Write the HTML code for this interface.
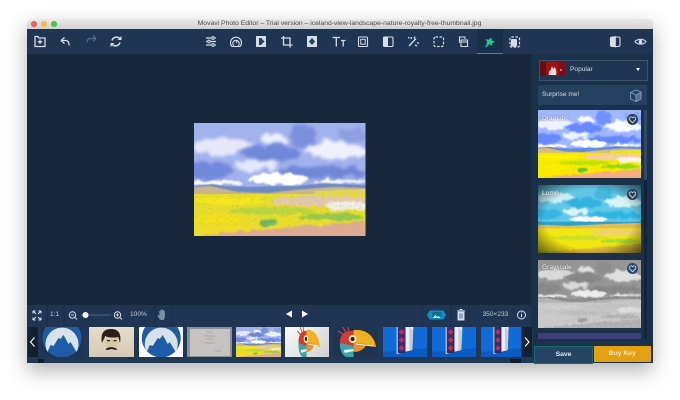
<!DOCTYPE html>
<html><head><meta charset="utf-8">
<style>
html{background:#fff}
html,body{margin:0;padding:0;width:680px;height:400px;overflow:hidden;font-family:"Liberation Sans",sans-serif}
body{position:relative;filter:blur(.3px);background:#fff}
.a{position:absolute}
#win{left:27px;top:18.500px;width:625.500px;height:344.500px;box-shadow:0 8px 20px rgba(0,0,0,.3);border-radius:4px 4px 2px 2px}
svg{display:block}
.t{color:#c3ccd6;font-size:6.600px;white-space:nowrap;line-height:10px}
</style></head><body>
<svg width="0" height="0" style="position:absolute">
<defs>
<filter id="rough" x="-20%" y="-20%" width="140%" height="140%" color-interpolation-filters="sRGB"><feTurbulence type="fractalNoise" baseFrequency=".08" numOctaves="4" seed="7"/><feDisplacementMap in="SourceGraphic" scale="14" xChannelSelector="R" yChannelSelector="G"/><feGaussianBlur stdDeviation="1.500"/></filter>
<filter id="rough2" x="-10%" y="-20%" width="120%" height="140%" color-interpolation-filters="sRGB"><feTurbulence type="fractalNoise" baseFrequency=".14" numOctaves="3" seed="3"/><feDisplacementMap in="SourceGraphic" scale="7" xChannelSelector="R" yChannelSelector="G"/><feGaussianBlur stdDeviation=".8"/></filter>
<filter id="b2" x="-30%" y="-30%" width="160%" height="160%"><feGaussianBlur stdDeviation=".5"/></filter>
<filter id="grainG" x="0" y="0" width="100%" height="100%" color-interpolation-filters="sRGB"><feTurbulence type="fractalNoise" baseFrequency=".4" numOctaves="2" seed="11"/><feColorMatrix values="0 0 0 0 .55  0 0 0 0 .82  0 0 0 0 .25  0 2.500 0 0 -1.250"/></filter>
<filter id="grainW" x="0" y="0" width="100%" height="100%" color-interpolation-filters="sRGB"><feTurbulence type="fractalNoise" baseFrequency=".5" numOctaves="2" seed="5"/><feColorMatrix values="0 0 0 0 1  0 0 0 0 1  0 0 0 0 1  0 3 0 0 -1.500"/></filter>
<g id="clouds">
<g filter="url(#rough)">
<ellipse cx="30" cy="23" rx="30" ry="8" fill="#e6e8fa"/>
<ellipse cx="75" cy="30" rx="30" ry="9" fill="#7088da"/>
<ellipse cx="108" cy="14" rx="12" ry="12" fill="#7a90dd"/>
<ellipse cx="80" cy="16" rx="14" ry="5" fill="#eff0fb"/>
<ellipse cx="140" cy="28" rx="30" ry="9" fill="#eef0fb"/>
<ellipse cx="158" cy="12" rx="14" ry="6" fill="#8da0e2"/>
<ellipse cx="14" cy="47" rx="26" ry="8" fill="#7289dc"/>
<ellipse cx="130" cy="49" rx="46" ry="5" fill="#6f87d8"/>
<ellipse cx="62" cy="42" rx="20" ry="6" fill="#e4e8fa"/>
</g>
<g filter="url(#rough2)">
<ellipse cx="84" cy="56" rx="30" ry="6" fill="#ffffff"/>
<ellipse cx="22" cy="60" rx="26" ry="2.500" fill="#f7f8fe"/>
<ellipse cx="145" cy="59" rx="28" ry="2.200" fill="#f0f2fc"/>
</g></g>
<g id="ground">
<path d="M0 63l18-2 14 2 22 1 30-1 18 0 26-3 20 1 23 1v10H0z" fill="#6f8abf" filter="url(#b2)"/>
<path d="M0 64l16-1 14 3 14 3 30 1 26-3 24-2 17-1 30 1v7H0z" fill="#c9b690" filter="url(#b2)"/>
<path d="M120 68l51-2v5h-51z" fill="#dcd65c"/>
<rect x="0" y="71" width="171" height="42" fill="#ecdc2c"/>
<g filter="url(#rough2)">
<ellipse cx="36" cy="78" rx="36" ry="3.500" fill="#f8e61c"/>
<ellipse cx="78" cy="88" rx="44" ry="4" fill="#bcd53e"/>
<ellipse cx="138" cy="94" rx="32" ry="3.500" fill="#94c94e"/>
<ellipse cx="26" cy="96" rx="26" ry="5" fill="#f6e01a"/>
<ellipse cx="74" cy="100" rx="8" ry="3" fill="#6cb660"/>
<ellipse cx="128" cy="78" rx="52" ry="5" fill="#e6c7b2"/>
<ellipse cx="152" cy="83" rx="22" ry="5" fill="#f5ecea"/>
<path d="M0 116l30-6 60-5 81-7v18z" fill="#dcab92"/>
</g>
<rect y="71" width="171" height="32" filter="url(#grainG)" opacity=".5"/>
</g>
<symbol id="land" viewBox="0 0 171 113" preserveAspectRatio="none"><svg width="171" height="113"><rect width="171" height="113" fill="#a2b2ec"/><use href="#clouds"/><use href="#ground"/></svg></symbol>
<symbol id="gray" viewBox="0 0 171 113" preserveAspectRatio="none"><svg width="171" height="113"><rect width="171" height="113" fill="#9a9a9a"/><use href="#clouds"/><use href="#ground"/><rect y="60" width="171" height="53" filter="url(#grainW)" opacity=".45"/></svg></symbol>
<radialGradient id="vig" cx=".5" cy=".5" r=".72"><stop offset=".6" stop-color="#000" stop-opacity="0"/><stop offset="1" stop-color="#000" stop-opacity=".65"/></radialGradient>
<symbol id="mt" viewBox="0 0 45 30" preserveAspectRatio="xMidYMid slice">
<circle cx="22.500" cy="11" r="19.500" fill="#1d5da8"/>
<path d="M8 25A16.500 16.500 0 1 1 37 25L31 15l-2 2-5-9-3 4-2-1-5 8-3-1z" fill="#d8e0ea"/>
</symbol>
<symbol id="parrot" viewBox="0 0 45 30" preserveAspectRatio="none">
<path d="M6 15c0-8 6-12 14-11v14c0 3-9 6-14-3z" fill="#d43b32"/>
<path d="M20 3c12-1 21 5 23 17l-23-3z" fill="#efb021"/>
<path d="M6 16l14 3v11H14C9 30 6 24 6 16z" fill="#3da4a8"/>
<path d="M10 23l10-1v2l-9 2z" fill="#e8f0f0"/>
<path d="M20 15l13 2c-1 5-7 8-13 8z" fill="#e8902a"/>
<path d="M22 17l18 2" stroke="#fff" stroke-width=".8"/>
<circle cx="19" cy="12" r="4" fill="#f6e7b0"/><circle cx="19" cy="12" r="2" fill="#1d2733"/>
<path d="M12 5l-3-5M15 4l-1-4M9 7l-5-3" stroke="#d43b32" stroke-width="1.300"/>
</symbol>
<symbol id="box" viewBox="0 0 45 30" preserveAspectRatio="none">
<rect width="45" height="30" fill="#0f6bd8"/>
<path d="M0 25l45-4v9H0z" fill="#0b5cc0"/>
<path d="M14 0h17l-1 23-16 4z" fill="#e8edf4"/>
<rect x="15" y="0" width="8" height="26" fill="#352a6c"/>
<path d="M19 2l3 3-3 3-3-3zM19 10l3 3-3 3-3-3zM19 18l3 3-3 3-3-3z" fill="#c42d4f"/>
<path d="M27 0l4 4-1 19-3 1z" fill="#c3ccd8"/>
</symbol>
</defs>
</svg>

<div class="a" id="win"></div>
<!-- title bar -->
<div class="a" style="left:27px;top:18.500px;width:625.500px;height:10.500px;background:linear-gradient(#e9e8e8,#d3d2d2);border-radius:4px 4px 0 0"></div>
<div class="a" style="left:31px;top:21.300px;width:5.500px;height:5.500px;border-radius:50%;background:#f0605a"></div>
<div class="a" style="left:41.300px;top:21.300px;width:5.500px;height:5.500px;border-radius:50%;background:#f6bd3e"></div>
<div class="a" style="left:51px;top:21.300px;width:5.500px;height:5.500px;border-radius:50%;background:#3ec84a"></div>
<div class="a" style="left:27px;top:19px;width:625px;text-align:center;font-size:6.800px;line-height:10px;color:#4a4a4a;white-space:nowrap">Movavi Photo Editor – Trial version – iceland-view-landscape-nature-royalty-free-thumbnail.jpg</div>
<!-- toolbar -->
<div class="a" style="left:27px;top:29px;width:625.500px;height:25px;background:#1f3553"></div>
<div class="a" style="left:477px;top:29px;width:26px;height:25px;background:#1a2f49"></div>
<div class="a" style="left:477px;top:52.700px;width:26px;height:1.300px;background:#17a87e"></div>
<!-- canvas -->
<div class="a" style="left:27px;top:54px;width:504px;height:251px;background:#17273c"></div>
<!-- sidebar -->
<div class="a" style="left:531px;top:54px;width:121.500px;height:309px;background:#1b3049"></div>
<!-- main photo -->
<svg class="a" style="left:194px;top:123px" width="171.500" height="113"><use href="#land" width="171.500" height="113"/></svg>

<!-- toolbar icons -->
<svg class="a" style="left:27px;top:29px" width="626" height="25" fill="none" stroke="#d5dde6" stroke-width="1.100">
<path d="M8 7.500h3l1 1.500h6v8.500H8zM13 10.500v4.500M10.700 12.800h4.600" stroke-width="1.300"/>
<path d="M34 11.500l3.500-3M34 11.500l3.500 3M34 11.500h5c2 0 3 1.500 3.200 5" stroke-width="1.300"/>
<path d="M60 13.500c.3-3 1.500-4 3-4h6M69 9.500l-3-2.800M69 9.500l-3 2.800" stroke="#566b85" stroke-width="1.200"/>
<path d="M85 11.500a4.700 4.700 0 0 1 8-1.800M93 13.500a4.700 4.700 0 0 1-8 1.800" stroke-width="1.500"/>
<path d="M94.500 7v4h-4zM83.500 18v-4h4z" fill="#d5dde6" stroke="none"/>
<path d="M179 9h5M188 9h1M179 12.500h1M184 12.500h5M179 16h5M188 16h1" stroke-width="1.200"/>
<circle cx="186" cy="9" r="1.300"/><circle cx="182" cy="12.500" r="1.300"/><circle cx="186" cy="16" r="1.300"/>
<path d="M205 17.500a5.500 5.500 0 1 1 8 0zM207 17a3.200 3.200 0 1 1 4 0M209 14l1.500-2.500"/>
<rect x="229" y="7" width="10" height="11" rx=".5" fill="#d5dde6" stroke="none"/>
<path d="M234 9l3.500 3.500-3.500 3.500h-2V9z" fill="#24405f" stroke="none"/>
<path d="M256.500 7v9h9M254 9h9v9.500" stroke-width="1.300"/>
<rect x="280" y="7" width="10" height="11" rx=".5" fill="#d5dde6" stroke="none"/>
<path d="M285 9l3 3.500-3 3.500-3-3.500z" fill="#24405f" stroke="none"/>
<path d="M305.500 8.500h7.500M309.300 8.500V17.500M314 11.500h4.500M316.200 11.500V17.500" stroke-width="1.300"/>
<rect x="331.500" y="8" width="9" height="9.500" rx="1" stroke-width="1.100"/><rect x="333.800" y="10.300" width="4.400" height="4.900" stroke-width="1"/>
<rect x="356.500" y="8" width="9.500" height="9.500" rx="1"/><rect x="357" y="8.500" width="4" height="8.500" fill="#d5dde6" stroke="none"/>
<path d="M382 17l7-7.500M384 10l.5-2M381 8.500l1.500.500M388 16l2 1M391 15v-2M388 7.500l-1 2" stroke-width="1.300"/>
<rect x="407" y="8" width="9.500" height="9.500" rx="1.500" stroke-dasharray="2.500 1.500" stroke-width="1.200"/>
<path d="M432.500 14V8h5.500v2" stroke-width="1.100"/><path d="M434 11h6.500v6.500H434zM434 13h6.500" stroke-width="1.100"/>
<path d="M458.500 18l4-4" stroke="#1fc88f" stroke-width="1.500"/>
<path d="M463.500 8l1 3 3.500.500-2.500 2 .5 3-3-1.700-3 1.700.5-3-2.500-2 3.500-.500z" fill="#1fc88f" stroke="none" transform="rotate(15 463 12)"/>
<rect x="483" y="8" width="9.500" height="10" rx="1.500" stroke-dasharray="2.500 1.500" stroke-width="1.200"/>
<rect x="484" y="10" width="6" height="7.500" rx="1" fill="#d5dde6" stroke="none"/>
<rect x="583.500" y="8" width="9.500" height="9.500" rx="1.500"/><path d="M588.300 7v11.500"/><rect x="584" y="8.500" width="4.200" height="8.500" fill="#d5dde6" stroke="none"/>
<path d="M608 12.700c2.500-3.200 8.500-3.200 11 0-2.500 3.200-8.500 3.200-11 0z"/><circle cx="613.500" cy="12.700" r="1.800" fill="#d5dde6" stroke="none"/>
</svg>

<!-- sidebar content -->
<div class="a" style="left:538.500px;top:59.500px;width:107px;height:19px;border:1px solid #3a526f;background:#1f3553"></div>
<div class="a" style="left:540px;top:62px;width:25px;height:14px;background:#9c1219"></div>
<svg class="a" style="left:540px;top:62px" width="25" height="14"><rect width="6" height="14" fill="#6c0a12"/><rect x="19" width="6" height="14" fill="#7c0d14"/><path d="M9 13c-1-3 1-4 2-6l1-3 1 3 2-2c1 3 2 5 1 8z" fill="#f3dcdc"/><circle cx="21" cy="8" r="1" fill="#e89090"/></svg>
<div class="a t" style="left:570px;top:65px;color:#d5dde6">Popular</div>
<div class="a" style="left:635.500px;top:67.500px;width:0;height:0;border:2.500px solid transparent;border-top:3px solid #fff"></div>
<div class="a" style="left:538px;top:85px;width:109px;height:20px;background:#24415f"></div>
<div class="a t" style="left:542px;top:90px;color:#d5dde6">Surprise me!</div>
<svg class="a" style="left:629px;top:89px" width="13" height="13" fill="none" stroke="#7f9cb8" stroke-width=".9"><path d="M1.500 3.500L7 1l5 2v7l-5 2.500L1.500 10zM1.500 3.500L7 6l5-2.500M7 6v6.500"/><path d="M7 6l5-2.500v6.500l-5 2.500z" fill="#7f9cb8" fill-opacity=".5"/></svg>

<!-- preset cards -->
<svg class="a" style="left:538px;top:110px" width="103" height="68"><use href="#land" width="103" height="68" style="filter:saturate(1.350) contrast(1.100)"/></svg>
<svg class="a" style="left:538px;top:185px" width="103" height="68" viewBox="0 0 171 113" preserveAspectRatio="none">
<rect width="171" height="113" fill="#62c6e6"/>
<g filter="url(#rough)"><ellipse cx="30" cy="20" rx="30" ry="8" fill="#c8eef4"/><ellipse cx="75" cy="30" rx="30" ry="9" fill="#34b2df"/><ellipse cx="108" cy="14" rx="14" ry="11" fill="#46b8e0"/><ellipse cx="140" cy="29" rx="30" ry="9" fill="#d8f2f5"/><ellipse cx="130" cy="50" rx="46" ry="5" fill="#2fb3e2"/><ellipse cx="14" cy="48" rx="26" ry="7" fill="#36b4e4"/><ellipse cx="62" cy="44" rx="20" ry="6" fill="#d8f4f6"/></g>
<g filter="url(#rough2)"><ellipse cx="84" cy="57" rx="32" ry="5" fill="#fff"/></g>
<path d="M0 61h171v10H0z" fill="#2fa3cb" filter="url(#b2)"/>
<path d="M0 66l50 2 60-3 61-2v10H0z" fill="#e2bb5a" filter="url(#b2)"/>
<rect y="72" width="171" height="41" fill="#f1e710"/>
<g filter="url(#rough2)"><ellipse cx="70" cy="88" rx="46" ry="3.500" fill="#c4e02e"/><ellipse cx="135" cy="93" rx="30" ry="3" fill="#9cde3c"/><ellipse cx="130" cy="79" rx="42" ry="5" fill="#f2d072"/><path d="M0 116l30-6 60-5 81-7v18z" fill="#e0bc3a"/></g>
<rect width="171" height="113" fill="url(#vig)"/>
</svg>
<svg class="a" style="left:538px;top:259.500px" width="103" height="68"><use href="#gray" width="103" height="68" style="filter:grayscale(1) contrast(.85)"/></svg>
<div class="a" style="left:538px;top:333px;width:103px;height:6px;background:#3c3f78"></div>
<div class="a" style="left:644px;top:110px;width:3px;height:70px;background:#2f4a68"></div>
<div class="a" style="left:644px;top:180px;width:3px;height:158px;background:#13233a"></div>
<div class="a t" style="left:542px;top:114px;color:#f4f6f9;text-shadow:0 0 2px #556">Dramatic</div>
<div class="a t" style="left:542px;top:188.500px;color:#f4f6f9;text-shadow:0 0 2px #456">Lomo</div>
<div class="a t" style="left:542px;top:262.500px;color:#f4f6f9;text-shadow:0 0 2px #555">Grayscale</div>
<svg class="a" style="left:626.500px;top:113.500px" width="11" height="11"><circle cx="5.500" cy="5.500" r="5.500" fill="#2a3f5c"/><path d="M5.500 8.800L2.500 5.700a1.800 1.800 0 0 1 3-2 1.800 1.800 0 0 1 3 2z" fill="none" stroke="#dfe5ec" stroke-width=".8"/></svg>
<svg class="a" style="left:626.500px;top:188.500px" width="11" height="11"><circle cx="5.500" cy="5.500" r="5.500" fill="#2a3f5c"/><path d="M5.500 8.800L2.500 5.700a1.800 1.800 0 0 1 3-2 1.800 1.800 0 0 1 3 2z" fill="none" stroke="#dfe5ec" stroke-width=".8"/></svg>
<svg class="a" style="left:626.500px;top:262.500px" width="11" height="11"><circle cx="5.500" cy="5.500" r="5.500" fill="#2a4a72"/><path d="M5.500 8.800L2.500 5.700a1.800 1.800 0 0 1 3-2 1.800 1.800 0 0 1 3 2z" fill="none" stroke="#dfe5ec" stroke-width=".8"/></svg>
<div class="a" style="left:534px;top:346px;width:57px;height:15.500px;background:#254463;border:.7px solid #176a70;color:#dfe6ee;font-weight:bold;font-size:6.800px;line-height:15.500px;text-align:center">Save</div>
<div class="a" style="left:593.500px;top:346px;width:57.500px;height:16px;background:#e2a012;color:#f6e6b8;font-weight:bold;font-size:6.800px;line-height:16px;text-align:center">Buy Key</div>

<!-- bottom bar -->
<div class="a" style="left:27px;top:305px;width:504px;height:22px;background:#1f3553"></div>
<svg class="a" style="left:27px;top:305px" width="504" height="22" fill="none" stroke="#d5dde6" stroke-width="1">
<path d="M20.500 0v22M37 0v22M128 0v22M145 0v22M395 0v22M424 0v22M442 0v22" stroke="#1a2d47"/>
<path d="M6 6l3 3M6 6v2.500M6 6h2.500M14 6l-3 3M14 6v2.500M14 6h-2.500M6 15l3-3M6 15v-2.500M6 15h2.500M14 15l-3-3M14 15v-2.500M14 15h-2.500" stroke-width="1.100"/>
<circle cx="45.500" cy="10" r="3.200"/><path d="M48 12.500l2 2M44 10h3"/>
<path d="M54 10h30" stroke="#5e738c" stroke-width=".7"/><circle cx="58.500" cy="10" r="3" fill="#fff" stroke="none"/>
<circle cx="90.500" cy="10" r="3.200"/><path d="M93 12.500l2 2M89 10h3M90.500 8.500v3"/>
<path d="M134 15c-2-1-3-3-3.500-5l1-.3.800 1V6h1V5h1.200v-.7h1.200V5h1.200v1h1v5c0 2-.8 4-1.500 4z" fill="#7a8ea6" stroke="none"/>
<path d="M265 5.500v7l-6-3.500zM275 5.500v7l6-3.500z" fill="#fff" stroke="none"/>
<path d="M400 10l2.500-4.500h14l2.500 4.500-2.500 4.500h-14z" fill="#0f8fc0" stroke="none"/>
<path d="M405 7h9v6h-9z" fill="#0b6c95" stroke="none"/><path d="M405.500 13l3-3 2 2 1-1 2.500 2z" fill="#bce7f5" stroke="none"/>
<path d="M431 7h6v8h-6zM430 5.800h8M432.500 4.500h3" fill="#d5dde6" stroke="#d5dde6" stroke-width=".9"/><path d="M433 8.500v5M435 8.500v5" stroke="#1f3553" stroke-width=".7"/>
<circle cx="494.500" cy="10" r="4"/><path d="M494.500 9v3.200M494.500 7.500v.8" stroke-width="1"/>
</svg>
<div class="a t" style="left:50px;top:310px;color:#c3ccd6">1:1</div>
<div class="a t" style="left:130px;top:310px;color:#c3ccd6">100%</div>
<div class="a t" style="left:482.500px;top:310px;color:#c3ccd6">350×233</div>

<!-- filmstrip -->
<div class="a" style="left:27px;top:327px;width:506px;height:36px;background:#203755"></div>
<div class="a" style="left:28px;top:327px;width:10px;height:30px;background:#12202f"></div>
<div class="a" style="left:522px;top:327px;width:10px;height:30px;background:#12202f"></div>
<svg class="a" style="left:27px;top:327px" width="506" height="30" fill="none" stroke="#fff" stroke-width="1.100"><path d="M7.500 10.500L3.500 15l4 4.500M498 10.500l4 4.500-4 4.500"/></svg>
<div class="a" style="left:41px;top:327px;width:42px;height:30px;background:#1b3553;overflow:hidden"><svg width="42" height="30"><use href="#mt" width="42" height="30"/></svg></div>
<div class="a" style="left:89px;top:327px;width:45px;height:30px;background:linear-gradient(#e6dcc9,#d6cab5)">
<svg width="45" height="30"><path d="M13 16c-2-11 3-14 9-14s11 3 9 14c-1-3-1-5-2-6-4 1-9 1-13-1 0 2-2 4-3 7z" fill="#2c1f18"/><path d="M16 10c4 2 9 2 13 0 .5 8-1 14-6.500 14S15.500 18 16 10z" fill="#d8c6a8"/><path d="M16.500 22.500c2-3 9-3 12 0-3 .8-4-.5-6-.5s-3 1.500-6 .5z" fill="#21160f"/><rect x="18" y="13" width="3" height="1.200" fill="#2c1f18"/><rect x="24.500" y="13" width="3" height="1.200" fill="#2c1f18"/></svg></div>
<div class="a" style="left:138.500px;top:327px;width:44.500px;height:30px;background:#fff;overflow:hidden"><svg width="44.500" height="30"><use href="#mt" width="44.500" height="30"/></svg></div>
<div class="a" style="left:187px;top:327px;width:45px;height:30px;background:#8d9095"><div class="a" style="left:2.500px;top:1.500px;width:40px;height:27px;background:#c4c3c0"></div>
<svg class="a" width="45" height="30" stroke="#8b8b8c" stroke-width=".5"><path d="M19 5h7M17 9h11M19 12h7M17 16h11M28 24h6"/></svg></div>
<svg class="a" style="left:236px;top:327px" width="45" height="30"><use href="#land" width="45" height="30"/></svg>
<div class="a" style="left:285px;top:327px;width:44px;height:30px;background:linear-gradient(135deg,#fafafa,#cfcfcf)"><svg width="44" height="30"><svg x="10" y="0" width="26" height="30" viewBox="0 0 45 30" preserveAspectRatio="none"><use href="#parrot" width="45" height="30"/></svg></svg></div>
<div class="a" style="left:334px;top:327px;width:44px;height:30px;background:#1f3450"><svg width="44" height="30"><use href="#parrot" width="44" height="30"/></svg></div>
<svg class="a" style="left:383px;top:327px" width="44" height="30"><use href="#box" width="44" height="30"/></svg>
<svg class="a" style="left:432px;top:327px" width="44" height="30"><use href="#box" width="44" height="30"/></svg>
<svg class="a" style="left:481px;top:327px" width="40" height="30"><use href="#box" width="40" height="30"/></svg>
<div class="a" style="left:38px;top:359px;width:6px;height:4px;background:#101c2b"></div>
<div class="a" style="left:510px;top:359px;width:11px;height:4px;background:#101c2b"></div>
</body></html>
